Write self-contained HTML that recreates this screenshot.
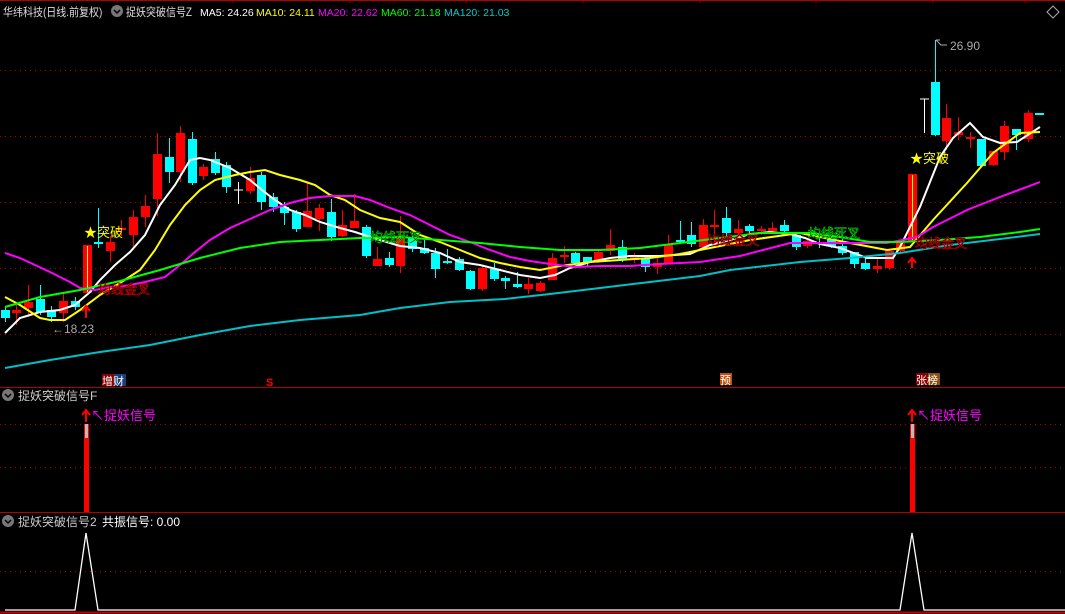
<!DOCTYPE html>
<html><head><meta charset="utf-8"><style>
html,body{margin:0;padding:0;background:#000;width:1065px;height:614px;overflow:hidden}
svg{display:block}
text{font-family:"Liberation Sans","Noto Sans CJK SC",sans-serif}
</style></head><body>
<svg id="s" width="1065" height="614" viewBox="0 0 1065 614" xmlns="http://www.w3.org/2000/svg">
<rect width="1065" height="614" fill="#000"/>
<g stroke="#b00000" stroke-width="1" stroke-dasharray="1,4" fill="none">
<line x1="0" y1="70.5" x2="1065" y2="70.5"/><line x1="0" y1="136.5" x2="1065" y2="136.5"/>
<line x1="0" y1="202.5" x2="1065" y2="202.5"/><line x1="0" y1="268.5" x2="1065" y2="268.5"/>
<line x1="0" y1="334.5" x2="1065" y2="334.5"/>
<line x1="0" y1="424.5" x2="1065" y2="424.5"/><line x1="0" y1="467.5" x2="1065" y2="467.5"/>
<line x1="0" y1="571.5" x2="1065" y2="571.5"/>
</g>
<line x1="0" y1="0.5" x2="1065" y2="0.5" stroke="#b00000"/>
<line x1="0" y1="387.5" x2="1065" y2="387.5" stroke="#b00000"/>
<line x1="0" y1="512.5" x2="1065" y2="512.5" stroke="#b00000"/>
<line x1="0" y1="612.5" x2="1065" y2="612.5" stroke="#c00000" stroke-width="2"/>
<g stroke="#b00000"><line x1="117" y1="0" x2="117" y2="3"/><line x1="233" y1="0" x2="233" y2="3"/><line x1="350" y1="0" x2="350" y2="3"/><line x1="466" y1="0" x2="466" y2="3"/><line x1="583" y1="0" x2="583" y2="3"/><line x1="700" y1="0" x2="700" y2="3"/><line x1="816" y1="0" x2="816" y2="3"/><line x1="933" y1="0" x2="933" y2="3"/><line x1="1025" y1="0" x2="1025" y2="3"/></g>
<path d="M1053 6 L1059 12 L1053 18 L1047 12 Z" fill="none" stroke="#aaa"/>
<g id="cand"></g>
<g id="ma" fill="none" stroke-width="2"></g>
<!-- header -->
<text x="3" y="16" font-size="10" fill="#ddd" transform="translate(3 16) scale(1 1.15) translate(-3 -16)">华纬科技(日线.前复权)</text>
<circle cx="117" cy="11" r="6" fill="#777"/><path d="M114 10 L117 13 L120 10" stroke="#000" stroke-width="1.5" fill="none"/>
<text x="126" y="16" font-size="10" fill="#ddd" transform="translate(126 16) scale(1 1.15) translate(-126 -16)">捉妖突破信号Z</text>
<text x="200" y="16" font-size="10.5" fill="#fff">MA5: 24.26</text>
<text x="256" y="16" font-size="10.5" fill="#ff0">MA10: 24.11</text>
<text x="318" y="16" font-size="10.5" fill="#f0f">MA20: 22.62</text>
<text x="381" y="16" font-size="10.5" fill="#0f0">MA60: 21.18</text>
<text x="444" y="16" font-size="10.5" fill="#0cc">MA120: 21.03</text>
<!-- annotations -->
<text x="84" y="237" font-size="13" fill="#ff0">★突破</text>
<text x="910" y="163" font-size="13" fill="#ff0">★突破</text>
<g font-size="13" fill="#000" stroke-width="0.5">
<text x="98" y="294" stroke="#f00">均线金叉</text>
<text x="915" y="248" stroke="#f00">均线金叉</text>
<text x="707" y="245" stroke="#f00">均线金叉</text>
<text x="370" y="242" stroke="#0f0">均线死叉</text>
<text x="808" y="238" stroke="#0f0">均线死叉</text>
</g>
<path d="M86 306 V318 M82 311 L86 306 L90 311" stroke="#f00" stroke-width="2" fill="none"/>
<path d="M912 258 V268 M908 263 L912 258 L916 263" stroke="#f00" stroke-width="2" fill="none"/>
<text x="52" y="333" font-size="12" fill="#aaa">←18.23</text>
<path d="M936 40 H940 M936 40 L941 45 H947" stroke="#aaa" fill="none"/>
<text x="950" y="50" font-size="12" fill="#aaa">26.90</text>
<!-- bottom tags -->
<rect x="102" y="374" width="12" height="12" fill="#8b0000"/><rect x="114" y="374" width="12" height="12" fill="#1d3f77"/>
<text x="102" y="385" font-size="11" fill="#fff">增财</text>
<text x="266" y="386" font-size="11" fill="#f00" font-weight="bold">S</text>
<rect x="720" y="373" width="12" height="12" fill="#c05010"/><text x="720" y="384" font-size="11" fill="#fff">预</text>
<rect x="916" y="373" width="12" height="12" fill="#8b0000"/><rect x="928" y="373" width="12" height="12" fill="#8b5010"/>
<text x="916" y="384" font-size="11" fill="#fff">张榜</text>
<!-- panel 2 -->
<circle cx="8" cy="395" r="6" fill="#777"/><path d="M5 394 L8 397 L11 394" stroke="#000" stroke-width="1.5" fill="none"/>
<text x="18" y="400" font-size="12" fill="#ccc">捉妖突破信号F</text>
<rect x="84" y="424" width="5" height="88" fill="#f00"/><rect x="85" y="424" width="3" height="14" fill="#bbb"/>
<rect x="910" y="424" width="5" height="88" fill="#f00"/><rect x="911" y="424" width="3" height="14" fill="#bbb"/>
<path d="M86 410 V422 M82 415 L86 410 L90 415" stroke="#f00" stroke-width="2" fill="none"/>
<path d="M912 410 V422 M908 415 L912 410 L916 415" stroke="#f00" stroke-width="2" fill="none"/>
<text x="91" y="420" font-size="13" fill="#f0f">↖捉妖信号</text>
<text x="917" y="420" font-size="13" fill="#f0f">↖捉妖信号</text>
<!-- panel 3 -->
<circle cx="8" cy="521" r="6" fill="#777"/><path d="M5 520 L8 523 L11 520" stroke="#000" stroke-width="1.5" fill="none"/>
<text x="18" y="526" font-size="12" fill="#ccc">捉妖突破信号2</text>
<text x="102" y="526" font-size="12" fill="#fff">共振信号: 0.00</text>
<polyline points="5,610 75,610 86,533 98,610 900,610 912,533 924,610 1065,610" fill="none" stroke="#fff" stroke-width="1.3"/>
</svg>
<script>
var C=[
[5,'c',310,318,306,322],[16,'r',310,313,305,325],[28,'r',302,308,285,317],[40,'c',299,312,285,315],[51,'c',310,317,306,322],[63,'r',301,313,293,322],[75,'c',301,307,297,310],
[87,'r',245,293,245,293],[98,'c',242,243,208,248],[110,'r',242,251,236,262],[121,'r',228,230,220,236],[133,'r',217,235,210,247],[145,'r',206,217,195,227],[157,'r',154,199,133,216],[169,'c',157,172,138,183],[180,'r',133,172,126,182],[192,'c',139,183,132,185],[203,'r',167,176,164,180],[215,'c',159,173,152,175],[226,'c',165,187,162,193],[238,'w',190,191,182,204],[250,'r',178,191,167,194],[261,'c',175,202,172,210],[273,'c',197,207,193,212],[284,'c',207,213,202,225],[296,'c',212,229,210,232],[307,'r',211,227,183,227],[319,'r',208,219,204,231],[331,'c',212,237,199,241],[342,'r',225,236,210,237],[354,'r',221,228,194,228],[366,'c',227,256,225,258],[377,'r',259,266,247,266],[389,'c',258,265,252,267],[400,'r',237,266,216,273],[412,'c',237,249,232,252],[424,'c',248,253,240,254],
[435,'c',253,269,248,278],[447,'c',261,263,249,264],[459,'c',259,270,257,271],[470,'c',271,289,270,290],[482,'r',268,289,265,291],[494,'c',269,279,263,281],[505,'c',278,281,276,289],[517,'c',284,287,272,288],[528,'r',284,289,278,294],[540,'r',283,291,281,292],[552,'r',258,280,253,280],[564,'r',255,257,246,263],[575,'c',253,263,252,264],[587,'c',257,263,257,266],[598,'r',252,262,250,263],[610,'r',245,251,229,255],[622,'c',247,259,240,262],[634,'r',257,260,253,263],[645,'c',258,267,256,272],[657,'r',263,267,258,274],[668,'r',245,263,235,263],[680,'c',240,242,221,243],[691,'c',235,244,222,247],[703,'r',225,247,219,248],[714,'r',225,227,210,245],[726,'c',218,233,207,236],
[738,'r',229,233,220,237],[749,'c',226,231,224,233],[761,'r',229,230,226,235],[772,'r',228,231,222,233],[784,'c',225,231,220,235],[796,'c',235,247,235,250],[807,'r',241,246,238,248],[819,'c',242,243,233,248],[831,'c',239,246,236,248],[842,'c',246,253,233,255],[854,'c',252,264,252,268],[865,'c',263,269,257,270],[877,'r',266,269,257,273],[889,'r',251,268,249,270],[900,'r',243,251,241,252],[912,'r',174,241,174,241],[924,'w',99,100,99,133],[935,'c',82,135,40,136],[946,'r',118,141,104,150],[958,'r',132,135,117,140],[970,'r',137,139,132,148],[981,'c',139,166,139,167],[993,'r',151,165,151,166],[1004,'r',126,152,121,160],[1016,'c',129,135,129,150],[1028,'r',113,139,110,142],[1039,'c',113,114,113,114]];
var col={r:'#ff0000',c:'#00ffff',w:'#ffffff'},h='';
C.forEach(function(d){var x=d[0],c=col[d[1]];
h+='<line x1="'+(x+.5)+'" y1="'+d[4]+'" x2="'+(x+.5)+'" y2="'+d[5]+'" stroke="'+c+'"/>';
var hh=Math.max(d[3]-d[2],2);
if(d[1]!='w')h+='<rect x="'+(x-4)+'" y="'+d[2]+'" width="9" height="'+hh+'" fill="'+c+'"/>';
else h+='<line x1="'+(x-4)+'" y1="'+d[2]+'" x2="'+(x+5)+'" y2="'+d[2]+'" stroke="'+c+'"/>';});
h+='<line x1="87.5" y1="246" x2="87.5" y2="292" stroke="#ff0"/><line x1="912.5" y1="175" x2="912.5" y2="240" stroke="#ff0"/>';
document.getElementById('cand').innerHTML=h;
var M={
'#ffffff':"5,333 20,318 40,312 60,310 75,305 90,292 100,280 115,265 130,252 145,235 160,205 175,185 190,160 200,158 210,160 230,168 250,180 262,190 275,200 290,210 305,215 320,222 340,228 355,232 370,237 390,243 400,246 420,248 440,253 460,262 480,265 500,270 520,275 540,278 555,275 570,268 590,262 610,258 630,256 660,256 690,254 710,245 730,240 750,234 770,232 790,234 805,238 820,244 840,248 867,258 893,258 900,247 920,207 940,157 953,138 970,123 983,137 1000,143 1017,142 1040,127",
'#ffff00':"5,297 20,305 40,318 50,320 65,320 80,310 100,295 120,283 140,270 155,250 170,225 185,205 200,190 215,180 235,175 250,172 265,170 280,175 300,180 315,185 330,195 345,200 360,210 380,218 400,222 420,235 440,242 460,250 480,258 500,263 520,267 540,270 560,266 590,262 620,260 650,258 680,254 700,250 750,240 800,233 850,243 887,250 910,247 933,220 967,183 993,153 1020,133 1040,132",
'#ff00ff':"5,253 20,258 35,265 50,272 70,282 80,288 95,290 110,287 125,286 145,282 165,277 180,265 195,252 210,240 230,228 250,219 270,210 290,203 310,198 330,196 355,196 370,200 390,208 410,215 430,225 450,235 470,242 490,250 510,257 530,261 550,264 575,267 600,266 630,266 660,264 700,262 740,256 790,243 887,243 917,237 933,227 967,210 1000,197 1040,182",
'#00ff00':"5,307 40,297 80,290 120,281 160,270 200,258 240,248 280,242 320,240 360,238 400,237 440,240 480,243 520,247 560,250 600,250 640,248 680,243 720,238 760,233 790,233 810,233 840,237 870,242 900,242 940,240 980,237 1020,232 1040,229",
'#00c0c8':"5,368 50,360 100,352 150,345 200,335 250,326 300,320 360,315 400,308 450,302 505,299 550,294 600,288 650,282 700,276 730,270 800,262 850,258 900,253 950,245 1000,239 1040,234"};
var g='';for(var k in M)g+='<polyline points="'+M[k]+'" stroke="'+k+'"/>';
document.getElementById('ma').innerHTML=g;
</script>
</body></html>
